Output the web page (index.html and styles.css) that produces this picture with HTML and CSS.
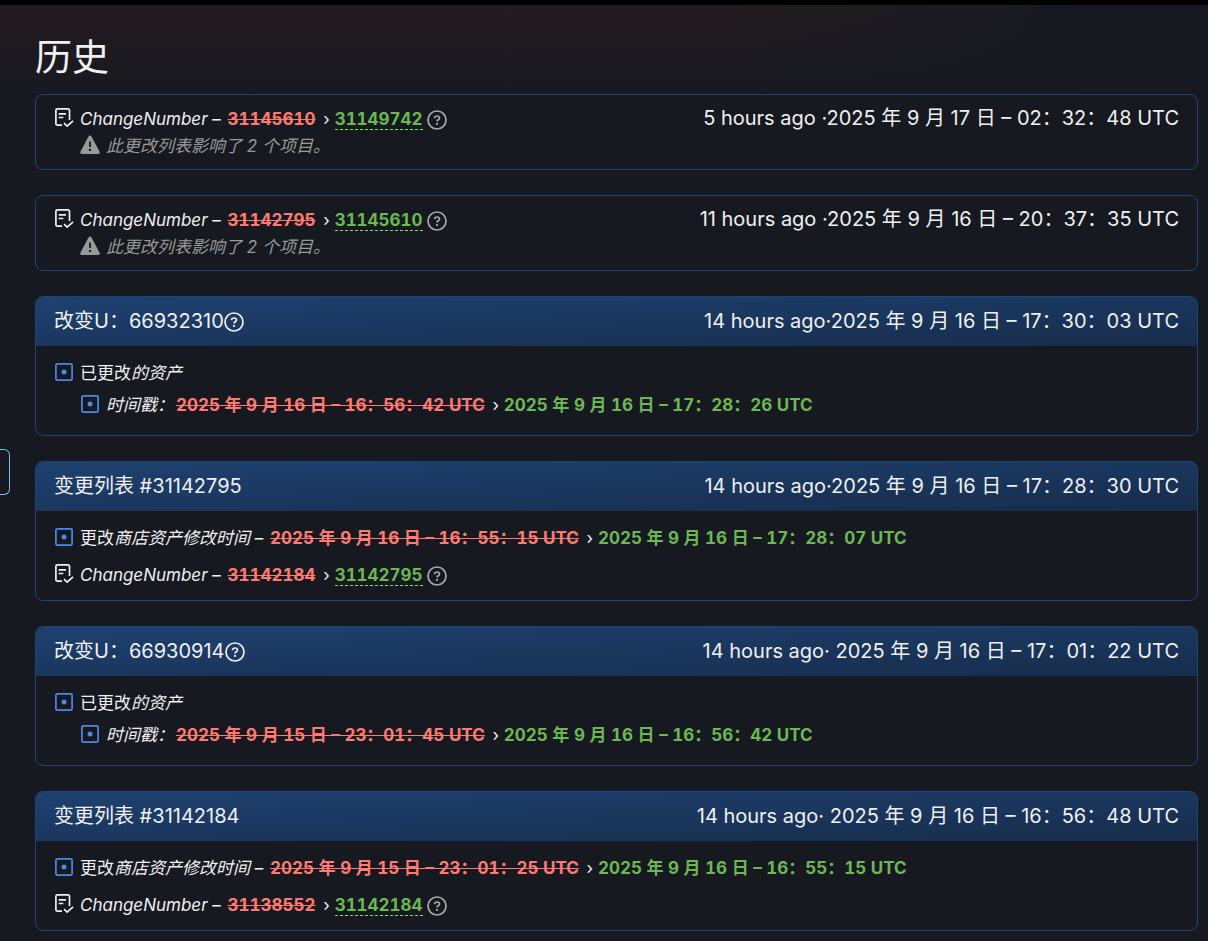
FILE: index.html
```html
<!DOCTYPE html>
<html lang="zh-CN">
<head>
   <meta charset="UTF-8">
   <meta name="viewport" content="width=device-width, initial-scale=1.0">
   <title>历史</title>
   <link rel="stylesheet" href="styles.css">
</head>
<body>
   <!-- Shared icons -->
   <svg class="sprite" aria-hidden="true">
      <symbol id="icon-help" viewBox="0 0 20 20">
         <circle cx="10" cy="10" r="9" fill="none" stroke="currentColor" stroke-width="1.7"/>
         <path d="M7.500 8.100c.2-1.400 1.200-2.100 2.500-2.100s2.500.8 2.500 2.100c0 1.700-2.400 1.600-2.400 3.300" fill="none" stroke="currentColor" stroke-width="1.700"/>
         <circle cx="10" cy="13.900" r="1.100" fill="currentColor"/>
      </symbol>
      <symbol id="icon-changelist" viewBox="0 0 20 20">
         <path d="M8 17.200H3.400a1.500 1.500 0 0 1-1.500-1.500V2.400A1.500 1.500 0 0 1 3.400.9H14a1.500 1.500 0 0 1 1.500 1.500V12M4.700 5.800H12M4.700 9.500h4.600M10 15.200l3.100 3 6-5.400" fill="none" stroke="currentColor" stroke-width="1.700"/>
      </symbol>
      <symbol id="icon-modified" viewBox="0 0 20 20">
         <rect x="1.900" y="1.900" width="16.200" height="16.200" rx="1.300" fill="none" stroke="currentColor" stroke-width="1.700"/>
         <circle cx="10" cy="10" r="2.500" fill="currentColor"/>
      </symbol>
      <symbol id="icon-alert" viewBox="0 0 20 20">
         <path fill="currentColor" fill-rule="evenodd" d="M8.500 1.500a1.700 1.700 0 0 1 3 0l8 15a1.600 1.600 0 0 1-1.400 2.500H1.900a1.600 1.600 0 0 1-1.400-2.500zM9.100 6.500v5.500h1.800V6.500zM10 13.700a1.200 1.200 0 1 0 0 2.400 1.200 1.200 0 0 0 0-2.400z"/>
      </symbol>
   </svg>

   <button class="side-tab" type="button" aria-label="菜单"></button>

   <main class="history">
      <h1>历史</h1>

      <section class="panel panel-plain">
         <ul class="changes">
            <li>
               <div class="row">
                  <svg class="icon"><use href="#icon-changelist"/></svg>
                  <div><i>ChangeNumber</i> – <del>31145610</del> › <a class="added" href="#31149742">31149742</a> <a class="help" href="#help" aria-label="帮助"><svg class="icon"><use href="#icon-help"/></svg></a></div>
               </div>
               <div class="row nested note">
                  <svg class="icon"><use href="#icon-alert"/></svg>
                  <i>此更改列表影响了 2 个项目。</i>
               </div>
            </li>
         </ul>
         <div class="when">5 hours ago ·<time>2025 年 9 月 17 日 – 02：32：48 UTC</time></div>
      </section>

      <section class="panel panel-plain">
         <ul class="changes">
            <li>
               <div class="row">
                  <svg class="icon"><use href="#icon-changelist"/></svg>
                  <div><i>ChangeNumber</i> – <del>31142795</del> › <a class="added" href="#31145610">31145610</a> <a class="help" href="#help" aria-label="帮助"><svg class="icon"><use href="#icon-help"/></svg></a></div>
               </div>
               <div class="row nested note">
                  <svg class="icon"><use href="#icon-alert"/></svg>
                  <i>此更改列表影响了 2 个项目。</i>
               </div>
            </li>
         </ul>
         <div class="when">11 hours ago ·<time>2025 年 9 月 16 日 – 20：37：35 UTC</time></div>
      </section>

      <section class="panel">
         <header class="panel-heading">
            <div class="title">改变U：66932310<a class="help" href="#help" aria-label="帮助"><svg class="icon"><use href="#icon-help"/></svg></a></div>
            <div class="when">14 hours ago·<time>2025 年 9 月 16 日 – 17：30：03 UTC</time></div>
         </header>
         <ul class="changes">
            <li>
               <div class="row">
                  <svg class="icon modified"><use href="#icon-modified"/></svg>
                  <div>已更改<i>的资产</i></div>
               </div>
               <ul class="nested">
                  <li class="row">
                     <svg class="icon modified"><use href="#icon-modified"/></svg>
                     <div><i>时间戳：</i><del>2025 年 9 月 16 日 – 16：56：42 UTC</del> › <ins>2025 年 9 月 16 日 – 17：28：26 UTC</ins></div>
                  </li>
               </ul>
            </li>
         </ul>
      </section>

      <section class="panel">
         <header class="panel-heading">
            <div class="title">变更列表 #31142795</div>
            <div class="when">14 hours ago·<time>2025 年 9 月 16 日 – 17：28：30 UTC</time></div>
         </header>
         <ul class="changes">
            <li class="row">
               <svg class="icon modified"><use href="#icon-modified"/></svg>
               <div>更改<i>商店资产修改时间</i> – <del>2025 年 9 月 16 日 – 16：55：15 UTC</del> › <ins>2025 年 9 月 16 日 – 17：28：07 UTC</ins></div>
            </li>
            <li class="row">
               <svg class="icon"><use href="#icon-changelist"/></svg>
               <div><i>ChangeNumber</i> – <del>31142184</del> › <a class="added" href="#31142795">31142795</a> <a class="help" href="#help" aria-label="帮助"><svg class="icon"><use href="#icon-help"/></svg></a></div>
            </li>
         </ul>
      </section>

      <section class="panel">
         <header class="panel-heading">
            <div class="title">改变U：66930914<a class="help" href="#help" aria-label="帮助"><svg class="icon"><use href="#icon-help"/></svg></a></div>
            <div class="when">14 hours ago· <time>2025 年 9 月 16 日 – 17：01：22 UTC</time></div>
         </header>
         <ul class="changes">
            <li>
               <div class="row">
                  <svg class="icon modified"><use href="#icon-modified"/></svg>
                  <div>已更改<i>的资产</i></div>
               </div>
               <ul class="nested">
                  <li class="row">
                     <svg class="icon modified"><use href="#icon-modified"/></svg>
                     <div><i>时间戳：</i><del>2025 年 9 月 15 日 – 23：01：45 UTC</del> › <ins>2025 年 9 月 16 日 – 16：56：42 UTC</ins></div>
                  </li>
               </ul>
            </li>
         </ul>
      </section>

      <section class="panel">
         <header class="panel-heading">
            <div class="title">变更列表 #31142184</div>
            <div class="when">14 hours ago· <time>2025 年 9 月 16 日 – 16：56：48 UTC</time></div>
         </header>
         <ul class="changes">
            <li class="row">
               <svg class="icon modified"><use href="#icon-modified"/></svg>
               <div>更改<i>商店资产修改时间</i> – <del>2025 年 9 月 15 日 – 23：01：25 UTC</del> › <ins>2025 年 9 月 16 日 – 16：55：15 UTC</ins></div>
            </li>
            <li class="row">
               <svg class="icon"><use href="#icon-changelist"/></svg>
               <div><i>ChangeNumber</i> – <del>31138552</del> › <a class="added" href="#31142184">31142184</a> <a class="help" href="#help" aria-label="帮助"><svg class="icon"><use href="#icon-help"/></svg></a></div>
            </li>
         </ul>
      </section>
   </main>
</body>
</html>
```
FILE: styles.css
```css
* {
   box-sizing: border-box;
}

body {
   margin: 0;
   border-top: 5px solid #000;
   background-color: #171920;
   background-image:
      linear-gradient(to right, transparent 60%, #171920 90%),
      linear-gradient(#231b20, #171920 96px);
   background-repeat: no-repeat;
   color: #f0f0f0;
   font-family: Inter, "Noto Sans CJK SC", sans-serif;
   font-size: 17px;
   line-height: 27px;
}

.sprite {
   position: absolute;
   width: 0;
   height: 0;
}

/* Drawer handle on the left edge of the window */
.side-tab {
   position: fixed;
   top: 449px;
   left: 0;
   width: 10px;
   height: 46px;
   padding: 0;
   border: 1px solid #78bff0;
   border-left: 0;
   border-radius: 0 6px 6px 0;
   background: #171920;
}

.history {
   padding: 28px 10px 9px 35px;
}

h1 {
   margin: 0 0 12px;
   font-size: 37px;
   font-weight: 400;
   line-height: 49px;
}

.panel {
   margin-bottom: 25px;
   border: 1px solid #1c4478;
   border-radius: 8px;
   overflow: hidden;
}

.panel:last-child {
   margin-bottom: 0;
}

.panel-plain {
   display: flex;
   justify-content: space-between;
   padding-right: 18px;
}

.panel-heading {
   display: flex;
   justify-content: space-between;
   padding: 11px 18px;
   background: linear-gradient(to right bottom, #1e4170, #162d4c);
   font-size: 20px;
}

.when {
   font-size: 20px;
}

.panel-plain .when {
   padding-top: 10px;
}

ul {
   margin: 0;
   padding: 0;
   list-style: none;
}

.changes {
   padding: 9px 18px 6px;
}

.panel-plain .changes {
   padding: 6px 18px 4px;
}

li {
   padding: 5px 0;
}

.row {
   display: flex;
   align-items: center;
   gap: 6px;
}

.nested {
   padding-left: 26px;
}

.icon {
   flex: none;
   width: 20px;
   height: 20px;
}

.row > .icon {
   margin-bottom: 3px;
}

.modified {
   color: #4c88ea;
}

.note {
   color: #999;
}

del,
ins,
.added {
   font-weight: 700;
   font-variant-numeric: tabular-nums;
}

del {
   margin: 0 3px 0 2px;
   color: #ff7b72;
}

ins,
.added {
   color: #6cb853;
   text-decoration: none;
}

.added {
   border-bottom: 1px dashed #7ee05a;
}

.help {
   color: #aaa;
}

.help .icon {
   vertical-align: -5px;
}

.title .help {
   color: #f0f0f0;
}

.title .icon {
   vertical-align: -4px;
}
```
